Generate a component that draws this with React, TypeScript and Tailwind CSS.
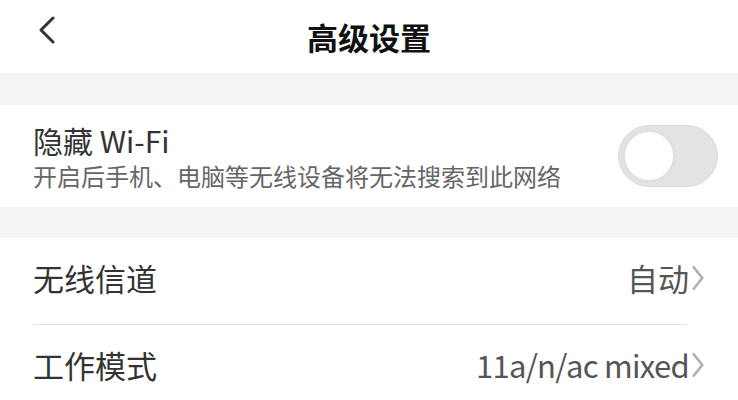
import React from 'react';

const font = { fontFamily: '"Noto Sans CJK SC", "Noto Sans", sans-serif' };

const Chevron = ({ className }: { className?: string }) => (
  <svg viewBox="0 0 14 26" className={className} fill="none" stroke="currentColor" strokeWidth="2.5" strokeLinecap="round" strokeLinejoin="round">
    <path d="M3 3 L11 13 L3 23" />
  </svg>
);

const Toggle = () => (
  <div className="w-[100px] h-[62px] rounded-full bg-[#e3e3e3] border border-[#dcdcdc] p-[3px] flex items-center">
    <div className="w-[54px] h-[54px] rounded-full bg-white border-[3px] border-[#e0e0e0]" />
  </div>
);

const Row = ({ label, value, tight }: { label: string; value: string; tight?: boolean }) => (
  <div className="h-[86px] flex items-center justify-between pr-[32px] pb-[6px]">
    <span className="text-[31px] text-[#333]">{label}</span>
    <span className="flex items-center text-[31px] text-[#555]">
      <span className={tight ? 'tracking-[-0.7px]' : ''}>{value}</span>
      <Chevron className="w-[16px] h-[28px] ml-[1px] text-[#b0b0b0]" />
    </span>
  </div>
);

export default function App() {
  return (
    <div className="w-[738px] h-[400px] overflow-hidden bg-[#f4f4f4]" style={font}>
      <header className="h-[73px] bg-white flex items-center relative">
        <button className="absolute left-[38px] top-[16px] text-[#333]" aria-label="Back">
          <svg viewBox="0 0 18 28" className="w-[18px] h-[28px]" fill="none" stroke="currentColor" strokeWidth="3" strokeLinecap="round" strokeLinejoin="round">
            <path d="M15 2 L3 14 L15 26" />
          </svg>
        </button>
        <h1 className="w-full text-center text-[31px] font-bold text-[#111] leading-none">高级设置</h1>
      </header>

      <div className="h-[32px]" />

      <section className="h-[102px] bg-white flex items-center justify-between pl-[33px] pr-[20px]">
        <div className="flex flex-col">
          <span className="text-[30px] leading-[36px] text-[#333]">隐藏 Wi-Fi</span>
          <span className="text-[24px] leading-[30px] mt-[3px] text-[#666]">开启后手机、电脑等无线设备将无法搜索到此网络</span>
        </div>
        <Toggle />
      </section>

      <div className="h-[31px]" />

      <section className="bg-white pl-[33px] h-[200px]">
        <Row label="无线信道" value="自动" />
        <div className="h-px bg-[#e2e2e2] mr-[51px]" />
        <Row label="工作模式" value="11a/n/ac mixed" tight />
      </section>
    </div>
  );
}
